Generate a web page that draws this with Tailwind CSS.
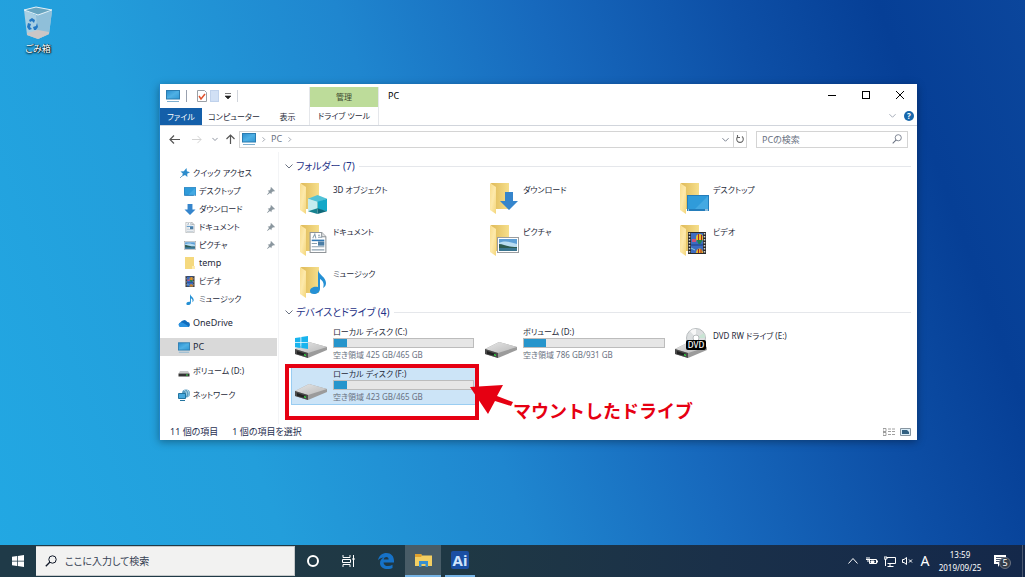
<!DOCTYPE html>
<html lang="ja">

<head>
    <meta charset="UTF-8">
    <meta name="viewport" content="width=device-width, initial-scale=1.0">
    <title>PC</title>
    <script src="https://cdn.jsdelivr.net/npm/@tailwindcss/browser@4"></script>
</head>

<body class="min-h-screen flex flex-col overflow-hidden font-['Noto_Sans','Noto_Sans_CJK_JP',sans-serif] [font-feature-settings:'palt'] text-[8px] leading-4 text-gray-800 bg-[linear-gradient(70deg,#22a8e3_0%,#239edb_24%,#1f86cf_44%,#1769bd_60%,#0d4fa6_76%,#063f96_88%,#0b469c_100%)]">

    <!-- shared icons -->
    <svg class="absolute w-0 h-0" aria-hidden="true">
        <defs>
            <linearGradient id="screen" x1="0" y1="0" x2="1" y2="1">
                <stop offset="0" stop-color="#2a8dce" />
                <stop offset=".5" stop-color="#4fb0e4" />
                <stop offset="1" stop-color="#3197d3" />
            </linearGradient>
            <linearGradient id="gold" x1="0" y1="0" x2="1" y2="0">
                <stop offset="0" stop-color="#dfba58" />
                <stop offset="1" stop-color="#f6df8c" />
            </linearGradient>
            <linearGradient id="cream" x1="0" y1="0" x2="1" y2="1">
                <stop offset="0" stop-color="#f8dc8b" />
                <stop offset=".5" stop-color="#fde9ab" />
                <stop offset="1" stop-color="#f4d67b" />
            </linearGradient>
            <linearGradient id="metal" x1="0" y1="0" x2="1" y2="1">
                <stop offset="0" stop-color="#e6e6e6" />
                <stop offset="1" stop-color="#b9b9b9" />
            </linearGradient>
        </defs>
        <symbol id="pc" viewBox="0 0 14 12">
            <rect x=".5" y=".5" width="13" height="8.5" fill="url(#screen)" stroke="#2b7cb0" />
            <path d="M1 11.5h12" stroke="#7fb0d0" />
        </symbol>
        <symbol id="folder" viewBox="0 0 28 32">
            <path d="M1 1h18v26H6z" fill="url(#gold)" />
            <path d="M0 1l6 4v27l-6-4z" fill="url(#cream)" />
        </symbol>
        <symbol id="note" viewBox="0 0 16 24">
            <path d="M8 0c1 5 8 7 8 13 0 2-1 4-3 5 2-5-1-8-3-9v10c0 3-3 5-6 5s-4-1-4-3c0-3 4-5 8-4z" fill="#2590d4" />
        </symbol>
        <symbol id="down" viewBox="0 0 18 18">
            <path d="M5 0h8v9h5l-9 9-9-9h5z" fill="#3585cc" />
        </symbol>
        <symbol id="doc" viewBox="0 0 16 20">
            <path d="M.5.5h11l4 4v15H.5z" fill="#fff" stroke="#8f9498" />
            <path d="M11.5.5v4h4" fill="#e3e6e8" stroke="#8f9498" />
            <path d="M3 6l2-4 1 4M8 3h2M8 5h4M2 14h12M2 17h12M2 11h5" fill="none" stroke="#8aa0b0" />
            <path d="M2 8h12" stroke="#2f78b5" stroke-width="1.5" />
            <rect x="8" y="9" width="6" height="4" fill="#4c7ea5" />
        </symbol>
        <symbol id="photo" viewBox="0 0 22 16">
            <rect x=".5" y=".5" width="21" height="15" fill="#fff" stroke="#9a9da0" />
            <path d="M2 2h18v12H2z" fill="#5d9fd6" />
            <path d="M2 6c6-3 12-1 18 1v3H2z" fill="#b9dcf2" />
            <path d="M2 7c5 0 8 3 18 3v2H2z" fill="#2d5a50" />
            <path d="M2 11h18v3H2z" fill="#3a7590" />
        </symbol>
        <symbol id="film" viewBox="0 0 18 22">
            <path d="M0 0h18v22H0z" fill="#2b2b2b" />
            <path d="M3 1h12v20H3z" fill="#3d6cc0" />
            <path d="M1.500 1v21M16.500 1v21" stroke="#d5d5d5" stroke-width="1.500" stroke-dasharray="1.500 1.500" />
            <ellipse cx="11.500" cy="6" rx="3.500" ry="4" fill="#e8c22c" />
            <path d="M10.500 2v8M13.500 3v6" stroke="#a82525" />
            <path d="M8.500 8h6l-2 4h-2z" fill="#218052" />
            <path d="M4 7h4v3H4z" fill="#cc5276" />
            <path d="M3 13h12" stroke="#1d3f86" />
            <path d="M8 21c0-6 7-6 7 0z" fill="#e8b52c" />
            <path d="M10.500 17v4M13 17v4" stroke="#a82525" />
            <path d="M3 16l4 2" stroke="#8fd0d0" />
        </symbol>
        <symbol id="desk" viewBox="0 0 22 16">
            <path d="M0 0h22v16H0z" fill="#247dbb" />
            <path d="M1 1h20v13H1z" fill="#2f9bda" />
            <path d="M21 1v13H8z" fill="#45a9e2" />
            <path d="M1 15h1M18 15h3" stroke="#fff" />
        </symbol>
        <symbol id="cube" viewBox="0 0 20 20">
            <path d="M10 0l10 4-10 4L0 4z" fill="#51c2d6" />
            <path d="M0 4l10 3v8L0 17z" fill="#c5ecef" />
            <path d="M20 4L10 7v8l10 2z" fill="#12a8c8" />
            <path d="M0 17l10-3v6z" fill="#17828f" />
            <path d="M20 17l-10-3v6z" fill="#0d6879" />
        </symbol>
        <symbol id="drive" viewBox="0 0 32 16">
            <path d="M0 7L14 0l18 5v3L13 16 0 12z" fill="#9b9b9b" />
            <path d="M0 7L14 0l18 5-19 6z" fill="url(#metal)" />
            <path d="M0 7l13 4v5L0 12z" fill="#4a4a4a" />
            <path d="M2 9l9 3v2l-9-2z" fill="#222" />
            <path d="M9 12l2 .6v1.600l-2-.6z" fill="#35d045" />
        </symbol>
        <symbol id="pin" viewBox="0 0 8 8">
            <path d="M4 0l4 4-1 .5-1-.3-1.500 1.500v1.600L3 6 .3 8 0 7.700 2 5 .7 3.500h1.600L3.800 2 3.500 1z" fill="#8b979f" />
        </symbol>
        <symbol id="lens" viewBox="0 0 12 12">
            <circle cx="7.500" cy="4.500" r="3.700" fill="none" stroke="currentColor" />
            <path d="M5 7L.8 11.200" stroke="currentColor" stroke-width="1.300" />
        </symbol>
        <symbol id="chev" viewBox="0 0 8 8">
            <path d="M.5 2.500L4 6l3.500-3.500" fill="none" stroke="currentColor" />
        </symbol>
        <symbol id="win" viewBox="0 0 13 13">
            <path d="M0 2l5.500-.8v5H0zM6.300 1L13 0v6.200H6.300zM0 7h5.500v5L0 11.200zM6.300 7H13v6l-6.700-1z" fill="currentColor" />
        </symbol>
    </svg>

    <main class="relative flex-1">
        <!-- desktop shortcut -->
        <button class="absolute left-[18px] top-[6px] w-10 flex flex-col items-center text-white text-[9px] leading-3">
            <svg class="w-7 h-[34px]" viewBox="0 0 28 34">
                <path d="M0 4L12 9 28 5 25 28 14 33 3 29z" fill="#a8cfe3" />
                <path d="M12 9L28 5 25 28 14 33z" fill="#8fbfd9" />
                <path d="M3 27l11-3 11 2v2l-11 5-11-4z" fill="#cbc6c6" />
                <path d="M0 4l12-3 16 3-14 5z" fill="#68a5c0" stroke="#e6f2f8" />
                <path d="M5 14l3-2 3 2-1 3-2-2-2 1zM4 17l3 1-1 3 2 2-3 1-2-3zM10 24l-1-3 3-1 1-3 1 4-2 3z" fill="#2378c4" />
            </svg>
            <span class="mt-[3px] whitespace-nowrap [text-shadow:0_1px_2px_#000,1px_0_1px_#000]">ごみ箱</span>
        </button>

        <!-- explorer window -->
        <section class="mt-[84px] ml-[159px] mr-[108px] border-l border-[#1f86cc] bg-white shadow-[0_2px_8px_rgba(0,0,0,0.35)]">
            <header class="flex items-stretch border-b border-gray-300 h-[42px]">
                <div class="flex flex-col w-[149px]">
                    <div class="flex items-center h-6 pl-[6px] gap-[6px]">
                        <svg class="w-[14px] h-3"><use href="#pc" /></svg>
                        <i class="w-px h-3 bg-gray-400"></i>
                        <svg class="w-[11px] h-3 ml-1" viewBox="0 0 11 12">
                            <path d="M.5.5h7l2 2v9h-9z" fill="#fff" stroke="#9aa0a6" />
                            <path d="M2 6l2 3 4-5" fill="none" stroke="#e0532d" stroke-width="1.500" />
                        </svg>
                        <i class="w-[9px] h-3 -ml-1 bg-[#d1e0f5] border border-[#c0d2ec]"></i>
                        <svg class="w-[6px] h-[6px]" viewBox="0 0 6 6"><path d="M0 .5h6M0 3h6L3 6z" fill="#222" stroke="#222" stroke-width=".6" /></svg>
                        <i class="w-px h-3 bg-gray-300"></i>
                    </div>
                    <nav class="flex flex-1 items-stretch leading-4">
                        <button class="w-[42px] bg-[#145fa9] text-white">ファイル</button>
                        <button class="w-16">コンピューター</button>
                        <button class="w-[43px]">表示</button>
                    </nav>
                </div>
                <div class="flex flex-col w-[70px] mt-[3px] border-r border-gray-200 border-l text-center">
                    <span class="h-5 leading-5 bg-[#bddc9a] text-[#3d4a30]">管理</span>
                    <button class="flex-1 leading-4 whitespace-nowrap">ドライブ ツール</button>
                </div>
                <h1 class="pl-[9px] pt-1 text-[9px] text-black">PC</h1>
                <div class="ml-auto flex flex-col">
                    <div class="flex h-[22px] items-center">
                        <button class="w-[34px] flex justify-center" aria-label="最小化"><svg class="w-2 h-2" viewBox="0 0 8 8"><path d="M0 4.500h8" stroke="#000" /></svg></button>
                        <button class="w-[34px] flex justify-center" aria-label="最大化"><i class="w-2 h-2 border border-black"></i></button>
                        <button class="w-[34px] flex justify-center" aria-label="閉じる"><svg class="w-2 h-2" viewBox="0 0 8 8"><path d="M0 0l8 8M8 0L0 8" stroke="#000" /></svg></button>
                    </div>
                    <div class="flex flex-1 items-center justify-end gap-2 pr-[3px]">
                        <svg class="w-[7px] h-[7px] text-gray-400"><use href="#chev" /></svg>
                        <button class="w-[10px] h-[10px] rounded-full bg-[#1767ac] text-white leading-[10px] font-bold" aria-label="ヘルプ">?</button>
                    </div>
                </div>
            </header>

            <div class="flex items-center h-[26px] pl-[9px] pr-[9px] text-gray-500">
                <div class="flex items-center w-[70px] gap-3">
                    <svg class="w-[11px] h-[9px]" viewBox="0 0 11 9"><path d="M11 4.500H1M5 .5l-4 4 4 4" fill="none" stroke="#555" stroke-width="1.200" /></svg>
                    <svg class="w-[10px] h-[9px]" viewBox="0 0 11 9"><path d="M0 4.500h10M6 .5l4 4-4 4" fill="none" stroke="#d0d0d0" /></svg>
                    <svg class="w-[6px] h-[6px] -ml-[2px]"><use href="#chev" /></svg>
                    <svg class="w-[9px] h-[10px] -ml-1" viewBox="0 0 9 10"><path d="M4.500 10V1M.5 5l4-4 4 4" fill="none" stroke="#555" stroke-width="1.200" /></svg>
                </div>
                <div class="flex flex-1 items-center h-[17px] border border-[#d4d4d4] pl-[2px] gap-[5px] text-[9px]">
                    <svg class="w-[14px] h-3"><use href="#pc" /></svg>
                    <svg class="w-[5px] h-[5px] -rotate-90"><use href="#chev" /></svg>
                    <span>PC</span>
                    <svg class="w-[5px] h-[5px] -rotate-90"><use href="#chev" /></svg>
                    <svg class="w-[7px] h-[7px] ml-auto -mr-px"><use href="#chev" /></svg>
                    <button class="flex items-center justify-center w-[13px] h-[15px] border-l border-[#d4d4d4] " aria-label="更新">
                        <svg class="w-2 h-2" viewBox="0 0 8 8"><path d="M2 1.500a3.300 3.300 0 1 0 4 0M1.500 0v2.500H4" fill="none" stroke="#666" stroke-width="1.100" /></svg>
                    </button>
                </div>
                <label class="flex items-center w-[152px] h-[17px] ml-[9px] border border-[#d4d4d4] px-[5px]">
                    <input type="text" placeholder="PCの検索" aria-label="PCの検索" class="flex-1 min-w-0 text-[9px] leading-[15px] placeholder:text-gray-500 outline-none">
                    <svg class="w-[10px] h-[10px]"><use href="#lens" /></svg>
                </label>
            </div>

            <div class="flex items-stretch">
                <!-- navigation pane -->
                <nav class="w-[119px] pt-3 border-r border-gray-100">
                    <a href="#" class="flex items-center h-[18px] pl-5 gap-[3px]">
                        <svg class="w-[10px] h-[10px]" viewBox="0 0 10 10"><path d="M6.500 0l.4 3.200L10 4.300 7.200 5.800l.2 3.200L5 7 2 8.500l.8-3L.5 3.500l3.300-.3z" fill="#2d8ccc" /><path d="M0 10l3-3" stroke="#7aa8c8" /></svg>
                        <span>クイック アクセス</span>
                    </a>
                    <a href="#" class="flex items-center h-[18px] pl-6 pr-[3px] gap-[3px]">
                        <svg class="w-3 h-[9px]"><use href="#desk" /></svg>
                        <span class="flex-1">デスクトップ</span>
                        <svg class="w-2 h-2"><use href="#pin" /></svg>
                    </a>
                    <a href="#" class="flex items-center h-[18px] pl-6 pr-[3px] gap-[3px]">
                        <svg class="w-3 h-[11px]"><use href="#down" /></svg>
                        <span class="flex-1">ダウンロード</span>
                        <svg class="w-2 h-2"><use href="#pin" /></svg>
                    </a>
                    <a href="#" class="flex items-center h-[18px] pl-6 pr-[3px] gap-[3px]">
                        <svg class="w-3 h-[11px]"><use href="#doc" /></svg>
                        <span class="flex-1">ドキュメント</span>
                        <svg class="w-2 h-2"><use href="#pin" /></svg>
                    </a>
                    <a href="#" class="flex items-center h-[18px] pl-6 pr-[3px] gap-[3px]">
                        <svg class="w-3 h-[9px]"><use href="#photo" /></svg>
                        <span class="flex-1">ピクチャ</span>
                        <svg class="w-2 h-2"><use href="#pin" /></svg>
                    </a>
                    <a href="#" class="flex items-center h-[18px] pl-6 gap-[3px]">
                        <svg class="w-3 h-3" viewBox="0 0 12 12"><path d="M1 0h9v9h1v3H1z" fill="#f5d97e" /><path d="M8 9h3v3H8z" fill="#ffebad" /></svg>
                        <span class="text-[9px]">temp</span>
                    </a>
                    <a href="#" class="flex items-center h-[18px] pl-6 gap-[3px]">
                        <svg class="w-3 h-[11px]"><use href="#film" /></svg>
                        <span>ビデオ</span>
                    </a>
                    <a href="#" class="flex items-center h-[18px] pl-6 gap-[3px]">
                        <svg class="w-3 h-[11px]"><use href="#note" /></svg>
                        <span>ミュージック</span>
                    </a>
                    <a href="#" class="flex items-center h-[18px] mt-[6px] pl-[18px] gap-[3px]">
                        <svg class="w-3 h-2" viewBox="0 0 12 8"><path d="M2.500 8a2.300 2.300 0 0 1 0-4.500A3.800 3.800 0 0 1 9.300 3 2.500 2.500 0 0 1 9.500 8z" fill="#0f6cbd" /><path d="M2.500 8a2.300 2.300 0 0 1 0-4.500C5 3 7 5 11 7.500L9.500 8z" fill="#2b93e0" /></svg>
                        <span class="text-[9px]">OneDrive</span>
                    </a>
                    <a href="#" class="flex items-center h-[18px] mt-[6px] mr-px pl-[18px] gap-[3px] bg-[#d9d9d9]">
                        <svg class="w-3 h-[11px]"><use href="#pc" /></svg>
                        <span class="text-[9px]">PC</span>
                    </a>
                    <a href="#" class="flex items-center h-[18px] mt-[6px] pl-[18px] gap-[3px]">
                        <svg class="w-3 h-[7px] mt-1" viewBox="0 0 12 7"><path d="M2 1h8l1.500 2.500H.5z" fill="#c9c9c9" /><path d="M.5 3.500h11v3H.5z" fill="#333" /><path d="M8 5h2" stroke="#3ddc4a" /></svg>
                        <span>ボリューム (D:)</span>
                    </a>
                    <a href="#" class="flex items-center h-[18px] mt-[6px] pl-[18px] gap-[3px]">
                        <svg class="w-3 h-3" viewBox="0 0 12 12"><circle cx="8" cy="4.500" r="4" fill="#5a9cc0" /><path d="M6 1c3 1 3 5 1 7M9 1c3 3 2 5 1 7" stroke="#b4dcec" fill="none" /><path d="M.5 4.500h7v5h-7z" fill="#46a8dc" stroke="#23749f" /><path d="M2 11.500h5" stroke="#23749f" /></svg>
                        <span>ネットワーク</span>
                    </a>
                </nav>

                <!-- file list -->
                <div class="flex-1 min-w-0 pl-[6px] pr-[6px] pt-[6px]">
                    <h2 class="flex items-center gap-[3px] text-[10px] text-[#1e3287]">
                        <svg class="w-2 h-2 text-gray-500"><use href="#chev" /></svg>
                        フォルダー (7)
                        <i class="flex-1 ml-px h-px bg-gray-200"></i>
                    </h2>
                    <div class="grid grid-cols-[repeat(3,190px)] auto-rows-[42px] pt-2 pl-[15px]">
                        <button class="flex items-start gap-[5px] text-left">
                            <span class="relative w-7 h-8"><svg class="w-7 h-8"><use href="#folder" /></svg><svg class="absolute left-2 top-[13px] w-[19px] h-[19px]"><use href="#cube" /></svg></span>3D オブジェクト
                        </button>
                        <button class="flex items-start gap-[5px] text-left">
                            <span class="relative w-7 h-8"><svg class="w-7 h-8"><use href="#folder" /></svg><svg class="absolute left-[10px] top-[10px] w-[18px] h-[18px]"><use href="#down" /></svg></span>ダウンロード
                        </button>
                        <button class="flex items-start gap-[5px] text-left">
                            <span class="relative w-7 h-8"><svg class="w-7 h-8"><use href="#folder" /></svg><svg class="absolute left-[7px] top-[13px] w-[22px] h-4"><use href="#desk" /></svg></span>デスクトップ
                        </button>
                        <button class="flex items-start gap-[5px] text-left">
                            <span class="relative w-7 h-8"><svg class="w-7 h-8"><use href="#folder" /></svg><svg class="absolute left-[9px] top-2 w-[18px] h-[21px]"><use href="#doc" /></svg></span>ドキュメント
                        </button>
                        <button class="flex items-start gap-[5px] text-left">
                            <span class="relative w-7 h-8"><svg class="w-7 h-8"><use href="#folder" /></svg><svg class="absolute left-[7px] top-[13px] w-[22px] h-4"><use href="#photo" /></svg></span>ピクチャ
                        </button>
                        <button class="flex items-start gap-[5px] text-left">
                            <span class="relative w-7 h-8"><svg class="w-7 h-8"><use href="#folder" /></svg><svg class="absolute left-2 top-2 w-[18px] h-[22px]"><use href="#film" /></svg></span>ビデオ
                        </button>
                        <button class="flex items-start gap-[5px] text-left">
                            <span class="relative w-7 h-8"><svg class="w-7 h-8"><use href="#folder" /></svg><svg class="absolute left-[10px] top-1 w-4 h-6"><use href="#note" /></svg></span>ミュージック
                        </button>
                    </div>

                    <h2 class="flex items-center gap-[3px] -mt-1 text-[10px] text-[#1e3287]">
                        <svg class="w-2 h-2 text-gray-500"><use href="#chev" /></svg>
                        デバイスとドライブ (4)
                        <i class="flex-1 ml-px h-px bg-gray-200"></i>
                    </h2>
                    <div class="grid grid-cols-[repeat(3,190px)] auto-rows-[42px] pt-1 pl-[6px] pb-4">
                        <button class="flex items-start pl-1 gap-[6px] text-left">
                            <span class="relative w-8 h-9 pt-[18px]"><svg class="w-8 h-4"><use href="#drive" /></svg><svg class="absolute left-0 top-3 w-[13px] h-[13px] text-[#19b4ee]"><use href="#win" /></svg></span>
                            <span class="flex flex-col w-[141px] leading-[13px] pt-px">
                                ローカル ディスク (C:)
                                <span class="h-[10px] border border-[#bcbcbc] bg-[#e6e6e6]"><i class="block h-full bg-[#2695cc]" style="width:9%"></i></span>
                                <span class="text-gray-500">空き領域 425 GB/465 GB</span>
                            </span>
                        </button>
                        <button class="flex items-start pl-1 gap-[6px] text-left">
                            <span class="w-8 h-9 pt-[18px]"><svg class="w-8 h-4"><use href="#drive" /></svg></span>
                            <span class="flex flex-col w-[142px] leading-[13px] pt-px">
                                ボリューム (D:)
                                <span class="h-[10px] border border-[#bcbcbc] bg-[#e6e6e6]"><i class="block h-full bg-[#2695cc]" style="width:16%"></i></span>
                                <span class="text-gray-500">空き領域 786 GB/931 GB</span>
                            </span>
                        </button>
                        <button class="flex items-start pl-1 gap-[6px] text-left">
                            <span class="relative w-8 h-9 pt-[18px]">
                                <svg class="w-8 h-4"><use href="#drive" /></svg>
                                <svg class="absolute left-[11px] top-1 w-5 h-[22px]" viewBox="0 0 20 22">
                                    <circle cx="10" cy="10" r="9.500" fill="#dcdfe0" stroke="#b8bcbe" />
                                    <path d="M10 10L4 3a9 9 0 0 1 6-2z" fill="#f7f7f7" />
                                    <path d="M10 10l8-5a9 9 0 0 1 1 5z" fill="#c9e4d4" />
                                    <circle cx="10" cy="10" r="3" fill="#fff" stroke="#b8bcbe" />
                                </svg>
                                <b class="absolute left-[11px] top-4 w-5 h-[10px] rounded-xs bg-black text-white leading-[10px] text-center font-medium">DVD</b>
                            </span>
                            <span class="pt-1">DVD RW ドライブ (E:)</span>
                        </button>
                        <div class="relative">
                            <button aria-pressed="true" class="flex items-start w-[185px] h-10 -mt-px pl-[3px] gap-[6px] text-left bg-[#cce4f7] border border-[#99cdf2]">
                                <span class="w-8 h-9 pt-[18px]"><svg class="w-8 h-4"><use href="#drive" /></svg></span>
                                <span class="flex flex-col w-[141px] leading-[13px] pt-px">
                                    ローカル ディスク (F:)
                                    <span class="h-[10px] border border-[#bcbcbc] bg-[#e6e6e6]"><i class="block h-full bg-[#2695cc]" style="width:9%"></i></span>
                                    <span class="text-gray-500">空き領域 423 GB/465 GB</span>
                                </span>
                            </button>
                            <!-- callout -->
                            <div class="absolute -left-[6px] -top-[2px] w-[194px] h-[56px] border-4 border-[#e60012]"></div>
                            <svg class="absolute left-[179px] top-[18px] w-[43px] h-[31px]" viewBox="0 0 43 31">
                                <path d="M0 3L33 1 27 12 43 18 41 22 25 17 18 30z" fill="#e60012" />
                            </svg>
                            <strong class="absolute left-[222px] top-8 text-lg leading-6 font-bold text-[#e60012] whitespace-nowrap font-['Noto_Sans_CJK_JP',sans-serif] [font-feature-settings:normal]">マウントしたドライブ</strong>
                        </div>
                    </div>
                </div>
            </div>

            <footer class="flex items-center h-4 pl-[10px] pr-[6px] text-[9px] text-[#1f2f50]">
                <span>11 個の項目</span>
                <span class="ml-[14px]">1 個の項目を選択</span>
                <button class="ml-auto" aria-label="詳細"><svg class="w-3 h-2" viewBox="0 0 12 8"><path d="M0 .5h3v3H0zM0 4.500h3v3H0z" fill="none" stroke="#888" stroke-width=".8" /><path d="M5 1h3M9 1h3M5 3.500h3M9 3.500h3M5 6.500h3M9 6.500h3" stroke="#888" stroke-width=".8" /></svg></button>
                <button class="ml-[5px]" aria-label="大アイコン"><svg class="w-[11px] h-2" viewBox="0 0 11 8"><path d="M.5.5h10v7H.5z" fill="#d9ecf7" stroke="#8795a0" /><path d="M2 2h5l2 2v2H2z" fill="#315f80" /></svg></button>
            </footer>
        </section>
    </main>

    <!-- taskbar -->
    <footer class="flex items-stretch h-8 text-white bg-[linear-gradient(90deg,#1f3a48_0%,#1f3844_45%,#1a3049_70%,#14284a_100%)]">
        <button class="flex w-9 items-center justify-center" aria-label="スタート"><svg class="w-3 h-3"><use href="#win" /></svg></button>
        <label class="flex items-center w-[259px] my-px border-y border-r border-[#c6c9ca] bg-[#f2f2f1] pl-[9px] gap-2 text-gray-900">
            <svg class="w-3 h-3"><use href="#lens" /></svg>
            <input type="text" placeholder="ここに入力して検索" aria-label="ここに入力して検索" class="flex-1 min-w-0 text-[10px] leading-4 placeholder:text-gray-700 outline-none">
        </label>
        <button class="flex w-[35px] items-center justify-center" aria-label="Cortana"><i class="w-3 h-3 rounded-full border-2 border-white"></i></button>
        <button class="flex w-9 items-center justify-center" aria-label="タスク ビュー">
            <svg class="w-[13px] h-3" viewBox="0 0 13 12"><path d="M1 0v2.500h7V0M1 12V9.500h7V12M.5 4.500h8v3h-8zM11.500 0v12" fill="none" stroke="#fff" /><path d="M10.500 3h2v2h-2z" fill="#fff" /></svg>
        </button>
        <button class="flex w-[39px] items-center justify-center" aria-label="Edge">
            <svg class="w-4 h-4" viewBox="0 0 16 16"><path d="M0 7.200C1 2.500 4.500 0 8.500 0 13 0 16 3.200 16 7.800v1.700H5.500c.2 4 5.500 4.500 9 2.300v3.200C8 17.800 2 15 2 10.200c0-2.700 1.500-4.500 3.700-5.600C3.600 4.800 1.700 5.700 0 7.200zM5.600 6.400h5c0-3.300-4.300-3.200-5 0z" fill="#1672c7" /></svg>
        </button>
        <button class="flex w-9 items-center justify-center bg-[#485c67] border-b-2 border-[#76b4e6]" aria-label="エクスプローラー">
            <svg class="w-[17px] h-[14px]" viewBox="0 0 17 14"><path d="M0 1h6l1 1.500h10V13H0z" fill="#f4cf62" /><path d="M0 1h6l1 1.500L6 4H0z" fill="#e0a12e" /><path d="M4 14V8h9v6h-2.500v-3h-4v3z" fill="#3a8fd0" /></svg>
        </button>
        <button class="flex w-[30px] ml-1 items-center justify-center border-b-2 border-[#76b4e6]" aria-label="Ai">
            <span class="w-[18px] h-[18px] rounded-xs bg-[#1a4fa3] text-[15px] leading-[18px] font-bold text-[#cfe4fb]">Ai</span>
        </button>

        <div class="ml-auto flex items-center">
            <svg class="w-[10px] h-[6px] mr-2" viewBox="0 0 10 6"><path d="M.5 5.500l4.500-5 4.500 5" fill="none" stroke="#fff" /></svg>
            <svg class="w-3 h-2 mr-[6px]" viewBox="0 0 12 8"><path d="M3.500 2.500h7v4h-7z" fill="none" stroke="#fff" /><path d="M5 4h3v1.500H5zM11.500 3.500v2M1 0v3M3 0v2M0 2.500h4M2 3v2" fill="#fff" stroke="#fff" /></svg>
            <svg class="w-3 h-[11px] mr-[6px]" viewBox="0 0 12 11"><path d="M2.500 1.500h9v6h-8M6 8v2.500M3.500 10.500h6M1.500 3v7M0 1h3v2H0z" fill="none" stroke="#fff" /></svg>
            <svg class="w-[11px] h-2 mr-[6px]" viewBox="0 0 11 8"><path d="M.5 2.500H2L4.500.5v7L2 5.500H.5zM7 2.500l3 3M10 2.500l-3 3" fill="none" stroke="#fff" /></svg>
            <span class="w-3 text-center text-sm">A</span>
            <time class="w-12 ml-[5px] text-center leading-[13px] whitespace-nowrap">13:59<br>2019/09/25</time>
            <button class="relative w-5 h-5 ml-[10px]" aria-label="通知">
                <svg class="w-3 h-3" viewBox="0 0 12 12"><path d="M0 0h12v9H6l-2 3V9H0z" fill="#fff" /><path d="M2 2.500h8M2 4.500h8M2 6.500h5" stroke="#1a2b48" stroke-width=".8" /></svg>
                <span class="absolute left-[5px] top-[6px] w-3 h-3 rounded-full border border-gray-500 bg-[#333c48] text-[9px] leading-[10px] text-white">5</span>
            </button>
            <i class="w-px h-8 ml-2 mr-[2px] bg-[#4a5870]"></i>
        </div>
    </footer>
</body>

</html>
